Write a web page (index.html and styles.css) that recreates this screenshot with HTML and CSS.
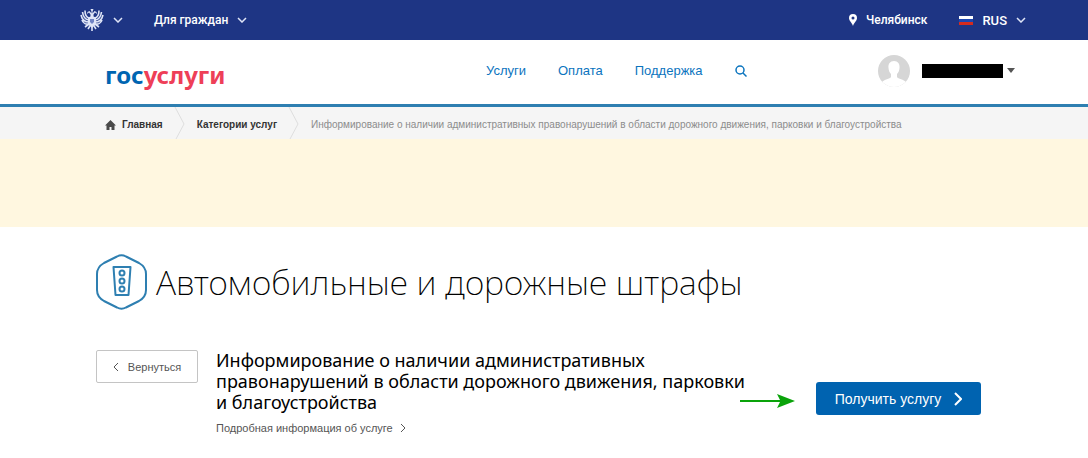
FILE: index.html
```html
<!DOCTYPE html>
<html lang="ru">
<head>
  <meta charset="UTF-8">
  <meta name="viewport" content="width=device-width, initial-scale=1.0">
  <title>Госуслуги</title>
  <link rel="stylesheet" href="styles.css">
</head>
<body>
  <!-- Top bar -->
  <div class="topbar">
    <button class="top-btn emblem-btn" type="button" aria-label="Органы власти">
      <svg class="emblem" viewBox="0 0 24 24" width="24" height="24">
        <g fill="none" stroke="#dfe5f7" stroke-width="1.6">
          <path d="M9 10C6 9 5 6 5 2.500M8.500 12C4 11 3 8 2.500 4M8.500 14C4 14 2 11 1 7M8.500 16C6 16.500 3 15 2 12"/>
          <path d="M15 10c3-1 4-4 4-7.500M15.500 12c4.500-1 5.500-4 6-8M15.500 14c4.500 0 6.500-3 7.500-7M15.500 16c2.500.5 5.500-1 6.500-4"/>
          <path d="M9 16l-4 3M15 16l4 3M12 18v5M10 18l-2 3M14 18l2 3"/>
        </g>
        <path d="M8 9.500l4-1.500 4 1.500v7L12 20l-4-3.500z" fill="#dfe5f7"/>
        <path d="M10.500 9V6.500L9 4.500 7 6l.5-2L9.500 3l2 2.500V3.500L10.500 1h3l-1 2.500v2L14.500 3l2 1 .5 2-2-1.500-1.500 2V9z" fill="#dfe5f7"/>
        <path d="M10 11h4v3l-2 2-2-2z" fill="#7083c4"/>
      </svg>
      <svg class="chevron" viewBox="0 0 10 6" width="10" height="6"><path d="M1 1l4 4 4-4"/></svg>
    </button>
    <button class="top-btn" type="button">
      <span>Для граждан</span>
      <svg class="chevron" viewBox="0 0 10 6" width="10" height="6"><path d="M1 1l4 4 4-4"/></svg>
    </button>
    <a class="city" href="#">
      <svg viewBox="0 0 8 12" width="8" height="12"><path d="M4 0a4 4 0 0 0-4 4c0 3 3 4.500 4 8 1-3.500 4-5 4-8a4 4 0 0 0-4-4zm0 2.500a1.500 1.500 0 1 1 0 3 1.500 1.500 0 0 1 0-3z" fill="#fff" fill-rule="evenodd"/></svg>
      <span>Челябинск</span>
    </a>
    <button class="top-btn lang-btn" type="button">
      <svg viewBox="0 0 14 9" width="14" height="9"><path fill="#fff" d="M0 0h14v3H0z"/><path fill="#1c46b0" d="M0 3h14v3H0z"/><path fill="#d52b1e" d="M0 6h14v3H0z"/></svg>
      <span>RUS</span>
      <svg class="chevron" viewBox="0 0 10 6" width="10" height="6"><path d="M1 1l4 4 4-4"/></svg>
    </button>
  </div>

  <!-- Header -->
  <header class="header">
    <a class="logo" href="#"><span class="logo-blue">гос</span>услуги</a>
    <nav class="nav">
      <a href="#">Услуги</a>
      <a href="#">Оплата</a>
      <a href="#">Поддержка</a>
      <button class="search" type="button" aria-label="Поиск">
        <svg viewBox="0 0 12 12" width="12" height="12"><g fill="none" stroke="#0b74be" stroke-width="1.5"><circle cx="5" cy="5" r="4"/><path d="M8 8l3.500 3.500"/></g></svg>
      </button>
    </nav>
    <button class="user" type="button" aria-label="Профиль">
      <svg viewBox="0 0 32 32" width="32" height="32">
        <clipPath id="avatar"><circle cx="16" cy="16" r="16"/></clipPath>
        <g clip-path="url(#avatar)">
          <path fill="#d6d6d6" d="M0 0h32v32H0z"/>
          <path fill="#fff" d="M16 6c-4 0-6 3-5.500 7 .2 2.500 1 4.500 2.500 6v3c-1 2-7 2.500-9 5v5h24v-5c-2-2.500-8-3-9-5v-3c1.500-1.500 2.300-3.500 2.500-6C22 9 20 6 16 6z"/>
        </g>
      </svg>
      <span class="user-name"></span>
      <span class="caret"></span>
    </button>
  </header>

  <!-- Breadcrumbs -->
  <nav class="breadcrumbs">
    <a href="#">
      <svg viewBox="0 0 11 10" width="11" height="10"><path fill="#4a4a4a" d="M5.500 0L11 5.500H9.500V10h-3V7h-2v3h-3V5.500H0z"/></svg>
      Главная
    </a>
    <svg class="divider" viewBox="0 0 12 32" width="12" height="32"><path d="M1 0l9 17-8 15"/></svg>
    <a href="#">Категории услуг</a>
    <svg class="divider" viewBox="0 0 12 32" width="12" height="32"><path d="M1 0l9 17-8 15"/></svg>
    <span>Информирование о наличии административных правонарушений в области дорожного движения, парковки и благоустройства</span>
  </nav>

  <div class="notice"></div>

  <!-- Service -->
  <main class="content">
    <div class="title">
      <svg viewBox="0 0 52 56" width="52" height="56">
        <g fill="none" stroke="#2e7fb1" stroke-width="2">
          <path d="M21 2.500q4.500-2.500 9 0l13 6.500q7 4 7 11v16q0 7-7 11l-13 6.500q-4.500 2.500-9 0L8 47q-7-4-7-11V20q0-7 7-11z"/>
          <path d="M17.500 13h17l-2 28h-13z" stroke-linejoin="round"/>
          <circle cx="26" cy="19" r="2.500"/>
          <circle cx="26" cy="27" r="2.500"/>
          <circle cx="26" cy="35" r="2.500"/>
        </g>
      </svg>
      <h1>Автомобильные и дорожные штрафы</h1>
    </div>
    <div class="service">
      <button class="back-btn" type="button">
        <svg viewBox="0 0 6 10" width="6" height="10"><path d="M5 1L1 5l4 4"/></svg>
        <span>Вернуться</span>
      </button>
      <div class="service-info">
        <h2>Информирование о наличии административных правонарушений в области дорожного движения, парковки и благоустройства</h2>
        <a class="details" href="#">Подробная информация об услуге
          <svg viewBox="0 0 6 10" width="6" height="10"><path d="M1 1l4 4-4 4"/></svg>
        </a>
      </div>
      <div class="action">
        <svg class="arrow" viewBox="0 0 56 16" width="56" height="16"><path fill="#0aa30a" d="M0 7h40L37 1l18 7-18 7 3-6H0z"/></svg>
        <button class="get-btn" type="button">
          <span>Получить услугу</span>
          <svg viewBox="0 0 8 14" width="8" height="14"><path d="M1 1l6 6-6 6"/></svg>
        </button>
      </div>
    </div>
  </main>
</body>
</html>
```
FILE: styles.css
```css
* {
  box-sizing: border-box;
}

body {
  margin: 0;
  font-family: "Liberation Sans", Arial, sans-serif;
  color: #000;
  background: #fff;
}

a {
  text-decoration: none;
}

button {
  font-family: inherit;
  border: none;
  background: none;
  padding: 0;
  cursor: pointer;
}

svg {
  flex-shrink: 0;
}

.topbar {
  display: flex;
  align-items: center;
  height: 40px;
  padding: 0 62px 0 80px;
  background: #1e3584;
}

.top-btn,
.city {
  display: flex;
  align-items: center;
  gap: 9px;
  color: #fff;
  font-family: Roboto, sans-serif;
  font-size: 12px;
  font-weight: 500;
}

.emblem-btn {
  margin-right: 31px;
}

.chevron {
  fill: none;
  stroke: #dfe5f7;
  stroke-width: 1.5;
}

.city {
  margin-left: auto;
  margin-right: 32px;
}

.lang-btn {
  font-size: 13px;
}

.header {
  display: flex;
  align-items: center;
  height: 67px;
  padding: 0 73px 3px 105px;
  border-bottom: 3px solid #2e7fb1;
}

.logo {
  flex: 0 1 381px;
  padding-top: 8px;
  font-family: "Noto Sans", sans-serif;
  font-size: 24px;
  line-height: 32px;
  font-weight: 700;
  color: #ee3f58;
}

.logo-blue {
  color: #0065b1;
}

.nav {
  display: flex;
  align-items: center;
  gap: 32px;
}

.nav a {
  color: #0b74be;
  font-size: 13px;
}

.search {
  display: flex;
}

.user {
  display: flex;
  align-items: center;
  margin-left: auto;
}

.user-name {
  width: 81px;
  height: 14px;
  margin: 0 4px 0 12px;
  background: #000;
}

.caret {
  border: 4px solid transparent;
  border-top: 5px solid #555;
  border-bottom: none;
}

.breadcrumbs {
  display: flex;
  align-items: center;
  gap: 11px;
  height: 32px;
  padding: 3px 0 0 105px;
  background: #f5f5f5;
  color: #8c8c8c;
  font-size: 10px;
  white-space: nowrap;
}

.breadcrumbs a {
  display: flex;
  align-items: center;
  gap: 6px;
  color: #333;
  font-weight: 700;
}

.divider {
  margin-top: -3px;
  fill: none;
  stroke: #dedede;
}

.notice {
  height: 88px;
  background: #fff7e0;
}

.content {
  padding: 27px 107px 20px 96px;
}

.title {
  display: flex;
  align-items: center;
  gap: 8px;
}

h1 {
  margin: 0;
  font-family: "Noto Sans", sans-serif;
  font-size: 34px;
  line-height: 48px;
  font-weight: 200;
}

.service {
  display: flex;
  align-items: flex-start;
  margin-top: 40px;
}

.back-btn {
  display: flex;
  flex-shrink: 0;
  align-items: center;
  justify-content: center;
  gap: 9px;
  width: 102px;
  height: 33px;
  margin-right: 18px;
  border: 1px solid #c4c4c4;
  border-radius: 2px;
  color: #555;
  font-size: 11px;
}

.back-btn svg,
.details svg {
  fill: none;
  stroke: #555;
}

.service-info {
  flex: 0 1 540px;
}

h2 {
  margin: 0 0 9px;
  font-family: "Noto Sans", sans-serif;
  font-size: 18px;
  line-height: 21px;
  font-weight: 400;
}

.details {
  display: flex;
  align-items: center;
  gap: 7px;
  color: #555;
  font-size: 11px;
}

.action {
  position: relative;
  flex-shrink: 0;
  margin-top: 32px;
  margin-left: auto;
}

/* pointer drawn over the gap before the button */
.arrow {
  position: absolute;
  right: 100%;
  top: 11px;
  margin-right: 20px;
}

.get-btn {
  display: flex;
  align-items: center;
  justify-content: center;
  gap: 13px;
  width: 165px;
  height: 33px;
  border-radius: 3px;
  background: #0063b0;
  color: #fff;
  font-size: 14px;
}

.get-btn svg {
  fill: none;
  stroke: #fff;
  stroke-width: 2;
}
```
